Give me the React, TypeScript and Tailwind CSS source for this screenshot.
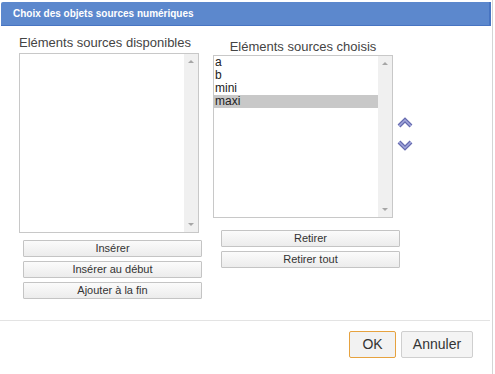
import React from "react";

const font = { fontFamily: '"Liberation Sans", Arial, sans-serif' };

const Chevron: React.FC<{ up?: boolean }> = ({ up }) => (
    <svg width="16" height="11" viewBox="0 0 16 11" className="block">
        <polyline
            points={up ? "2,9 8,3 14,9" : "2,2 8,8 14,2"}
            fill="none"
            stroke="#666bb0"
            strokeWidth="4"
            strokeLinejoin="miter"
        />
        <polyline
            points={up ? "2,9 8,3 14,9" : "2,2 8,8 14,2"}
            fill="none"
            stroke="#a3a8dc"
            strokeWidth="1.5"
        />
    </svg>
);

const ScrollBar: React.FC = () => (
    <div className="w-[14px] h-full bg-[#f0f0f0] flex flex-col justify-between items-center py-[6px]">
        <div className="w-0 h-0 border-l-[3px] border-r-[3px] border-b-[3px] border-l-transparent border-r-transparent border-b-[#a6a6a6]" />
        <div className="w-0 h-0 border-l-[3px] border-r-[3px] border-t-[3px] border-l-transparent border-r-transparent border-t-[#a6a6a6]" />
    </div>
);

const SmallButton: React.FC<{ label: string }> = ({ label }) => (
    <button className="h-[17px] w-full border border-[#c4c4c4] rounded-[1px] bg-gradient-to-b from-[#fbfbfb] to-[#ececec] text-[11px] leading-[15px] text-[#333]">
        {label}
    </button>
);

const ListBox: React.FC<{ items: string[]; selected?: string; height: string }> = ({ items, selected, height }) => (
    <div className={`${height} w-[180px] border border-[#c8c8c8] bg-white flex`}>
        <div className="flex-1 flex flex-col">
            {items.map((item) => (
                <div
                    key={item}
                    className={`h-[13px] pl-[1px] text-[12px] leading-[13px] text-[#222] ${item === selected ? "bg-[#c8c8c8]" : ""}`}
                >
                    {item}
                </div>
            ))}
        </div>
        <ScrollBar />
    </div>
);

export default function App() {
    return (
        <div className="w-[495px] h-[374px] bg-white" style={font}>
            <div className="w-[493px] h-[374px] border-r border-[#d4d4d4] flex flex-col">
                <div className="mt-[2px] ml-[1px] w-[490px] h-[24px] bg-[#5c88cd] border-r-2 border-b border-[#4774c2] rounded-tl-[2px] text-white font-bold text-[10px] leading-[23px] pl-[12px]">
                    Choix des objets sources numériques
                </div>

                <div className="flex h-[294px]">
                    <div className="ml-[19px] w-[180px] flex flex-col">
                        <div className="mt-[9px] h-[15px] text-[13px] leading-[15px] text-[#444]">
                            Eléments sources disponibles
                        </div>
                        <div className="mt-[3px]">
                            <ListBox items={[]} height="h-[180px]" />
                        </div>
                        <div className="mt-[7px] ml-[4px] w-[179px] flex flex-col gap-[4px]">
                            <SmallButton label="Insérer" />
                            <SmallButton label="Insérer au début" />
                            <SmallButton label="Ajouter à la fin" />
                        </div>
                    </div>

                    <div className="ml-[14px] w-[180px] flex flex-col">
                        <div className="mt-[13px] h-[15px] text-[13px] leading-[15px] text-[#444] text-center">
                            Eléments sources choisis
                        </div>
                        <div className="mt-[1px]">
                            <ListBox items={["a", "b", "mini", "maxi"]} selected="maxi" height="h-[163px]" />
                        </div>
                        <div className="mt-[12px] ml-[8px] w-[179px] flex flex-col gap-[4px]">
                            <SmallButton label="Retirer" />
                            <SmallButton label="Retirer tout" />
                        </div>
                    </div>

                    <div className="ml-[4px] pt-[91px] flex flex-col gap-[12px]">
                        <Chevron up />
                        <Chevron />
                    </div>
                </div>

                <div className="w-[490px] h-px bg-[#e3e3e3]" />

                <div className="flex justify-end gap-[5px] pr-[19px] mt-[10px]">
                    <button className="w-[47px] h-[27px] border border-[#e6a23f] rounded-[2px] bg-[#f2f2f2] text-[14px] text-[#333]">
                        OK
                    </button>
                    <button className="w-[72px] h-[27px] border border-[#cfcfcf] rounded-[2px] bg-[#f4f4f4] text-[14px] text-[#333]">
                        Annuler
                    </button>
                </div>
            </div>
        </div>
    );
}
